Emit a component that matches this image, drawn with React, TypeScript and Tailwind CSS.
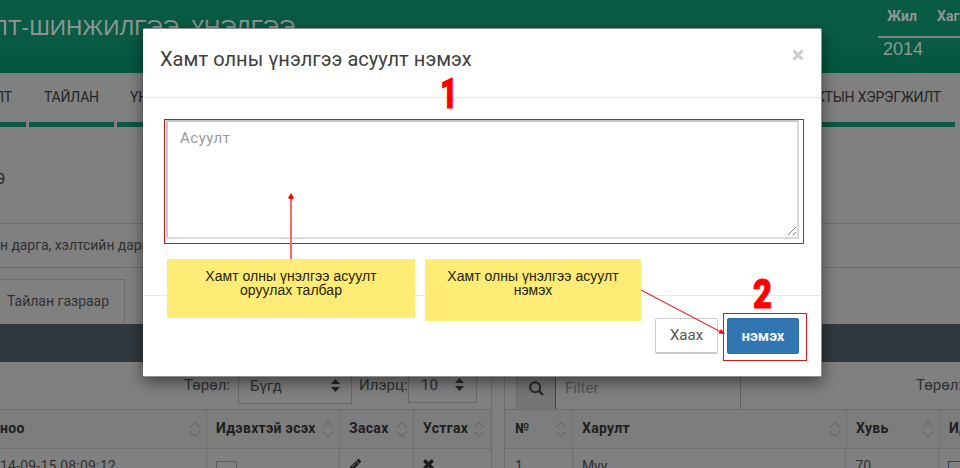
import type { ReactNode } from 'react';
import { FaPencilAlt, FaTimes } from 'react-icons/fa';

function SortIcon() {
  return (
    <svg width="12" height="17" viewBox="0 0 12 17" className="shrink-0" fill="none" stroke="#6b6b6b" strokeWidth="1.2">
      <path d="M1 6.500 6 1.500l5 5M1 10.500 6 15.500l5-5" />
    </svg>
  );
}

function SearchIcon() {
  return (
    <svg width="15" height="15" viewBox="0 0 15 15" fill="none" stroke="#262626">
      <circle cx="6.200" cy="6.200" r="5" strokeWidth="2" />
      <path d="m10 10 4 4" strokeWidth="2.400" />
    </svg>
  );
}

function SelectArrows() {
  return (
    <svg width="9" height="13" viewBox="0 0 9 13" className="shrink-0" fill="#262626">
      <path d="M0 5 4.500 0 9 5zM0 8h9L4.500 13z" />
    </svg>
  );
}

function HeadCell({ className, children }: { className: string; children: ReactNode }) {
  return (
    <div className={`flex h-full shrink-0 items-center justify-between whitespace-nowrap border-r border-[#707070] pl-[9px] ${className}`}>
      <span className="pb-[2px]">{children}</span>
      <SortIcon />
    </div>
  );
}

function Header() {
  return (
    <header className="flex h-[73px] shrink-0 justify-between bg-linear-to-b from-[#0a5b44] via-[#095b44] to-[#00563d] font-['Liberation_Sans',sans-serif] text-[#8f9693]">
      <h1 className="-ml-[7px] mt-[14px] whitespace-nowrap text-[22.500px] leading-[28px] tracking-[0.050px]">ЛТ-ШИНЖИЛГЭЭ, ҮНЭЛГЭЭ</h1>
      <div className="w-[82px] shrink-0 overflow-hidden">
        <div className="flex h-[36px] gap-[21px] pl-[9px] pt-[8px] font-['Roboto',sans-serif] text-[14px] font-bold leading-[17px]">
          <span className="w-[29px]">Жил</span>
          <span>Хагас</span>
        </div>
        <div className="h-[2px] bg-[#788580]" />
        <div className="pl-[5px] text-[18px] leading-[22px]">2014</div>
      </div>
    </header>
  );
}

function Nav() {
  return (
    <nav className="flex h-[54px] shrink-0 gap-[3px] whitespace-nowrap text-[14px] leading-[18px] tracking-[-0.200px] text-[#252525]">
      <div className="flex w-[26px] justify-end overflow-hidden border-b-[5px] border-[#0c5842] pr-[14px] pt-[15px]">СУДАЛТ</div>
      <div className="w-[85px] border-b-[5px] border-[#0c5842] pl-[15px] pt-[15px]">ТАЙЛАН</div>
      <div className="w-[400px] border-b-[5px] border-[#0c5842] pl-[13px] pt-[15px]">ҮНЭЛГЭЭ</div>
      <div className="flex w-[435px] justify-end border-b-[5px] border-[#0c5842] pr-[14px] pt-[15px]">ТӨСВИЙН ХУУЛЬ ТОГТООМЖТЫН ХЭРЭГЖИЛТ</div>
    </nav>
  );
}

function LeftTable() {
  return (
    <section className="flex w-[492px] flex-col border-r border-[#6d6d6d]">
      <div className="h-[38px] shrink-0 bg-[#30393f]" />
      <div className="flex h-[48px] shrink-0 border-b border-[#6d6d6d] pl-[184px] text-[15px] leading-[18px] text-[#303030]">
        <span className="w-[54px] pt-[14px]">Төрөл:</span>
        <div className="flex h-[42px] w-[114px] items-center justify-between border border-[#686868] px-[11px] pt-[5px]">
          <span>Бүгд</span><SelectArrows />
        </div>
        <span className="w-[56px] pl-[7px] pt-[14px]">Илэрц:</span>
        <div className="flex h-[41px] w-[69px] items-center justify-between border border-[#686868] px-[12px] pt-[4px]">
          <span>10</span><SelectArrows />
        </div>
      </div>
      <div className="flex h-[39px] shrink-0 border-b border-[#707070] bg-[#7d7d7d] text-[14px] font-bold tracking-[0.300px] text-[#202020]">
        <HeadCell className="w-[207px] pl-0! pr-[5px]">ноо</HeadCell>
        <HeadCell className="w-[133px] pr-[5px]">Идэвхтэй эсэх</HeadCell>
        <HeadCell className="w-[74px] pr-[5px]">Засах</HeadCell>
        <HeadCell className="w-[77px] border-r-0 pr-[6px]">Устгах</HeadCell>
      </div>
      <div className="flex h-[60px] shrink-0 whitespace-nowrap text-[14px] text-[#303030]">
        <div className="w-[207px] border-r border-[#707070] pt-[7px] tracking-[0.200px]">14-09-15 08:09:12</div>
        <div className="w-[133px] border-r border-[#707070] pl-[9px] pt-[12px]"><div className="h-[21px] w-[21px] border border-[#5d5d5d]" /></div>
        <div className="w-[74px] border-r border-[#707070] pl-[9px] pt-[10px]"><FaPencilAlt size={12} color="#1c1c1c" /></div>
        <div className="w-[77px] pl-[8px] pt-[9px]"><FaTimes size={13} color="#1c1c1c" stroke="#1c1c1c" strokeWidth="45" /></div>
      </div>
    </section>
  );
}

function RightTable() {
  return (
    <section className="flex w-[520px] shrink-0 flex-col border-l border-[#6d6d6d]">
      <div className="h-[38px] shrink-0 bg-[#30393f]" />
      <div className="flex h-[48px] shrink-0 border-b border-[#6d6d6d] text-[15px] leading-[18px] text-[#303030]">
        <div className="ml-[11px] flex w-[40px] items-center justify-center border-x border-l-[#6c6c6c] border-r-[#444] bg-[#757575] pt-[6px]">
          <SearchIcon />
        </div>
        <div className="w-[185px] border-r border-[#626262] pl-[9px] pt-[17px] text-[#545454]">Filter</div>
        <span className="ml-[175px] pt-[14px]">Төрөл:</span>
      </div>
      <div className="flex h-[39px] shrink-0 border-b border-[#707070] bg-[#7d7d7d] text-[14px] font-bold tracking-[0.300px] text-[#202020]">
        <HeadCell className="w-[68px] pl-[10px] pr-[5px]">№</HeadCell>
        <HeadCell className="w-[274px] pr-[5px]">Харулт</HeadCell>
        <HeadCell className="w-[93px] pr-[5px]">Хувь</HeadCell>
        <HeadCell className="w-[85px]">Идэвх</HeadCell>
      </div>
      <div className="flex h-[60px] shrink-0 text-[14px] text-[#303030]">
        <div className="w-[68px] border-r border-[#707070] pl-[10px] pt-[7px]">1</div>
        <div className="w-[274px] border-r border-[#707070] pl-[9px] pt-[7px]">Муу</div>
        <div className="w-[93px] border-r border-[#707070] pl-[9px] pt-[7px]">70</div>
        <div className="w-[85px] pl-[9px] pt-[12px]"><div className="h-[21px] w-[21px] border border-[#294761]" /></div>
      </div>
    </section>
  );
}

function Modal() {
  return (
    <div className="absolute left-[143px] top-[28px] flex h-[349px] w-[679px] flex-col rounded-[2px] border border-[#909090] border-l-white bg-white shadow-[0_5px_15px_rgba(0,0,0,0.5)]">
      <div className="flex h-[69px] shrink-0 justify-between border-b border-[#e9e9e9] pl-[16px] pr-[17px]">
        <h2 className="whitespace-nowrap pt-[18px] text-[20px] leading-[24px] tracking-[0.060px] text-[#404040]">Хамт олны үнэлгээ асуулт нэмэх</h2>
        <svg width="12" height="12" viewBox="0 0 12 12" className="mt-[20px]" stroke="#cccccc" strokeWidth="3"><path d="m1.500 1.500 9 9m0-9-9 9" /></svg>
      </div>
      <div className="h-[198px] shrink-0 border-b border-[#e9e9e9] pl-[22px] pt-[22px]">
        <div className="flex h-[119px] w-[633px] justify-between border-2 border-[#dadada] border-l-[#c9c9cd] border-t-[#c3c6cd] pl-[12px] pt-[6px] text-[15px] leading-[20px] tracking-[0.500px] text-[#999]">
          <span>Асуулт</span>
          <svg width="10" height="10" viewBox="0 0 10 10" className="mb-[1px] self-end" stroke="#777"><path d="M1 9 9 1M6 9l3-3" /></svg>
        </div>
      </div>
      <div className="flex gap-[9px] pl-[511px] pt-[22px] text-[15px]">
        <button className="h-[36px] w-[63px] rounded-[2px] border border-b-2 border-[#ccc] text-[#555]">Хаах</button>
        <button className="h-[36px] w-[72px] rounded-[2px] border border-[#2b6cab] bg-[#3276b1] font-bold text-[#eef5fa]">нэмэх</button>
      </div>
    </div>
  );
}

function Annotations() {
  return (
    <>
      <div className="absolute left-[164px] top-[119px] h-[125px] w-[640px] border border-[#bc1e1e]" />
      <div className="absolute left-[723px] top-[313px] h-[48px] w-[84px] border border-[#c91f1f]" />
      <div className="absolute left-[167px] top-[259px] h-[59px] w-[248px] bg-[#feec76] pt-[10px] text-center font-['Liberation_Sans',sans-serif] text-[14px] leading-[14px] tracking-[0.040px] text-[#26220c]">
        Хамт олны үнэлгээ асуулт<br />оруулах талбар
      </div>
      <div className="absolute left-[425px] top-[259px] h-[62px] w-[216px] bg-[#feec76] pt-[10px] text-center font-['Liberation_Sans',sans-serif] text-[14px] leading-[14px] tracking-[0.040px] text-[#26220c]">
        Хамт олны үнэлгээ асуулт<br />нэмэх
      </div>
      <svg className="absolute left-0 top-0" width="960" height="468" fill="#f00">
        <path d="M291 259V198" stroke="#ff6666" strokeWidth="2" />
        <path d="m291 193 3 5-1.500 1h-3l-1.500-1z" />
        <path d="m641 290 80 42" stroke="#e52b25" strokeWidth="1.100" />
        <path d="m725 334-6.500-.5 2.500-4.500z" />
      </svg>
      <span className="absolute left-[440px] top-[69px] origin-left scale-x-[0.72] text-[42px] font-black leading-[49px] text-[#f00] [-webkit-text-stroke:1px_#f00]">1</span>
      <span className="absolute left-[753px] top-[270px] origin-left scale-x-[0.8] text-[41px] font-black leading-[49px] text-[#f00] [-webkit-text-stroke:1px_#f00]">2</span>
    </>
  );
}

export default function App() {
  return (
    <div className="relative flex h-[468px] w-[960px] flex-col overflow-hidden bg-[#808080] font-['Roboto',sans-serif]">
      <Header />
      <Nav />
      <div className="h-[96px] shrink-0 pt-[43px] text-[15px] leading-[18px] text-[#252525]"><span className="-ml-[5px]">Э</span></div>
      <div className="flex h-[45px] shrink-0 items-center whitespace-nowrap border-y border-[#6c6c6c] text-[14px] tracking-[-0.060px] text-[#303030]">н дарга, хэлтсийн дарга</div>
      <div className="flex h-[56px] shrink-0 pt-[11px]">
        <div className="w-[125px] border-r border-t border-[#6c6c6c] pl-[7px] pt-[13px] text-[14px] leading-[17px] text-[#303030]">Тайлан газраар</div>
      </div>
      <main className="flex shrink-0 gap-[12px]">
        <LeftTable />
        <RightTable />
      </main>
      <Modal />
      <Annotations />
    </div>
  );
}
